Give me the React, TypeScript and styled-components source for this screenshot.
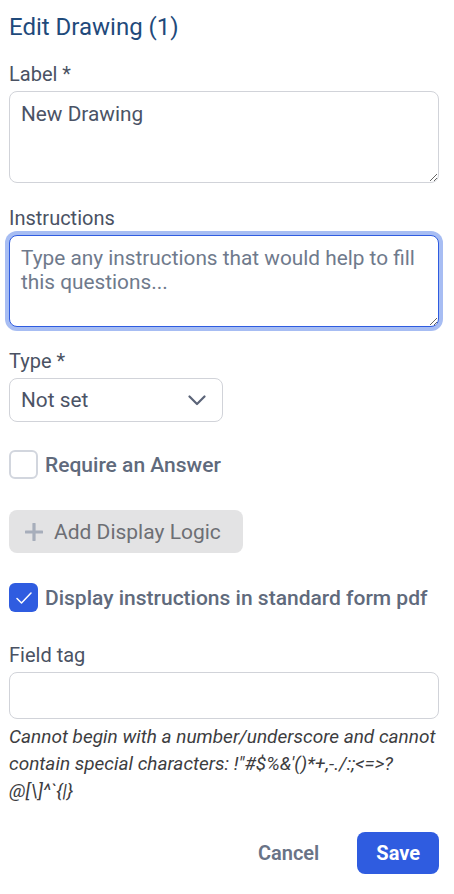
import React from "react";
import styled, { createGlobalStyle } from "styled-components";

const Global = createGlobalStyle`
  html, body { margin: 0; padding: 0; background: #ffffff; }
  body { font-family: Roboto, "Liberation Sans", Arial, sans-serif; }
  * { box-sizing: border-box; }
`;

const Page = styled.div`
  padding: 13px 15px 20px 9px;
  display: flex;
  flex-direction: column;
`;

const Title = styled.h1`
  margin: 0;
  font-size: 24px;
  line-height: 28px;
  font-weight: 400;
  color: #1f4a7b;
`;

const Field = styled.div<{ $mt: number }>`
  display: flex;
  flex-direction: column;
  gap: 5px;
  margin-top: ${(p) => p.$mt}px;
`;

const Label = styled.label`
  font-size: 20px;
  line-height: 24px;
  color: #4a5263;
`;

const TextArea = styled.textarea<{ $focused?: boolean }>`
  width: 100%;
  height: 92px;
  padding: 10px 11px;
  font-family: Roboto, "Liberation Sans", Arial, sans-serif;
  font-size: 20.8px;
  line-height: 24px;
  color: #4b5366;
  border: 1px solid ${(p) => (p.$focused ? "#2f5ce0" : "#d1d3d9")};
  border-radius: 8px;
  outline: none;
  box-shadow: ${(p) => (p.$focused ? "0 0 0 4px #a7bdf3" : "none")};
  resize: vertical;
  &::placeholder { color: #6f7a8c; }
`;

const SelectBox = styled.div`
  width: 214px;
  height: 44px;
  border: 1px solid #d1d3d9;
  border-radius: 8px;
  display: flex;
  align-items: center;
  justify-content: space-between;
  padding: 0 16px 0 11px;
  font-size: 20.8px;
  color: #4b5366;
`;

const CheckRow = styled.div<{ $mt: number }>`
  display: flex;
  align-items: center;
  gap: 7px;
  margin-top: ${(p) => p.$mt}px;
`;

const Box = styled.span<{ $checked?: boolean }>`
  width: 29px;
  height: 29px;
  border-radius: 6px;
  border: ${(p) => (p.$checked ? "none" : "2.5px solid #d2d6de")};
  background: ${(p) => (p.$checked ? "#2f5ce0" : "#ffffff")};
  display: flex;
  align-items: center;
  justify-content: center;
  flex-shrink: 0;
`;

const CheckText = styled.span`
  font-size: 21px;
  line-height: 24px;
  font-weight: 500;
  color: #606a7c;
`;

const LogicButton = styled.button`
  margin-top: 31px;
  align-self: flex-start;
  width: 234px;
  height: 43px;
  border: none;
  border-radius: 8px;
  background: #e3e3e4;
  display: flex;
  align-items: center;
  gap: 11px;
  padding: 0 0 0 16px;
  font-family: Roboto, "Liberation Sans", Arial, sans-serif;
  font-size: 21px;
  color: #6d6f74;
`;

const Input = styled.input`
  width: 100%;
  height: 47px;
  border: 1px solid #d1d3d9;
  border-radius: 8px;
  outline: none;
  padding: 0 11px;
  font-size: 20.8px;
`;

const Help = styled.p`
  margin: 4px 0 0 0;
  font-size: 19px;
  line-height: 27px;
  font-style: italic;
  color: #3d3d3f;
`;

const Actions = styled.div`
  margin-top: 28px;
  display: flex;
  justify-content: flex-end;
  align-items: center;
  gap: 22px;
`;

const Btn = styled.button<{ $primary?: boolean }>`
  height: 42px;
  border: none;
  border-radius: 8px;
  padding: 0 ${(p) => (p.$primary ? 19 : 16)}px;
  font-family: Roboto, "Liberation Sans", Arial, sans-serif;
  font-size: 20px;
  font-weight: ${(p) => (p.$primary ? 700 : 600)};
  background: ${(p) => (p.$primary ? "#2f5ce0" : "transparent")};
  color: ${(p) => (p.$primary ? "#ffffff" : "#697386")};
`;

export default function App() {
  return (
    <>
      <Global />
      <Page>
        <Title>Edit Drawing (1)</Title>
        <Field $mt={21}>
          <Label>Label *</Label>
          <TextArea defaultValue="New Drawing" />
        </Field>
        <Field $mt={23}>
          <Label>Instructions</Label>
          <TextArea
            $focused
            placeholder="Type any instructions that would help to fill this questions..."
          />
        </Field>
        <Field $mt={22}>
          <Label>Type *</Label>
          <SelectBox>
            <span>Not set</span>
            <svg width="18" height="11" viewBox="0 0 18 11" fill="none">
              <path d="M1.5 1.5 L9 9 L16.5 1.5" stroke="#5b6478" strokeWidth="2.2" strokeLinecap="round" strokeLinejoin="round" />
            </svg>
          </SelectBox>
        </Field>
        <CheckRow $mt={28}>
          <Box />
          <CheckText>Require an Answer</CheckText>
        </CheckRow>
        <LogicButton>
          <svg width="18" height="18" viewBox="0 0 18 18">
            <path d="M9 1 V17 M1 9 H17" stroke="#a7aebb" strokeWidth="3.2" strokeLinecap="round" />
          </svg>
          <span>Add Display Logic</span>
        </LogicButton>
        <CheckRow $mt={30}>
          <Box $checked>
            <svg width="16" height="12" viewBox="0 0 16 12" fill="none">
              <path d="M1 6.5 L5.5 11 L15 1" stroke="#ffffff" strokeWidth="1.5" strokeLinecap="round" strokeLinejoin="round" />
            </svg>
          </Box>
          <CheckText>Display instructions in standard form pdf</CheckText>
        </CheckRow>
        <Field $mt={31}>
          <Label>Field tag</Label>
          <Input />
        </Field>
        <Help>
          Cannot begin with a number/underscore and cannot contain special characters: !"#$%&amp;'()*+,-./:;&lt;=&gt;?<wbr />@[\]^`{"{|}"}
        </Help>
        <Actions>
          <Btn>Cancel</Btn>
          <Btn $primary>Save</Btn>
        </Actions>
      </Page>
    </>
  );
}
